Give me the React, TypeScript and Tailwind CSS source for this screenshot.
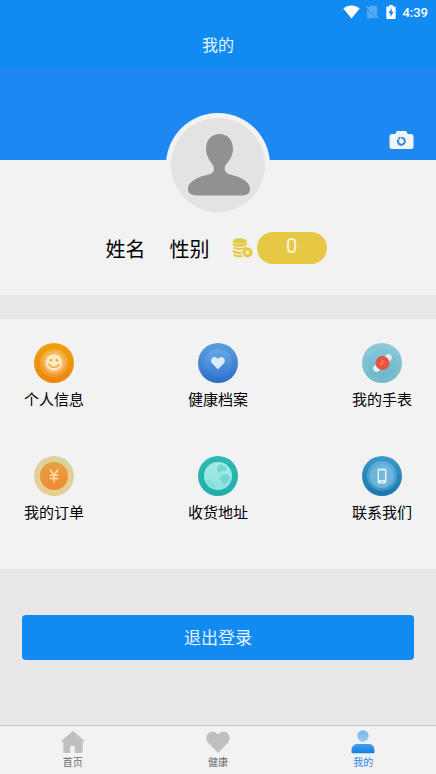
import type { ReactNode } from "react";

function StatusBar() {
  return (
    <div className="flex h-6 items-center justify-end pr-2 text-white">
      <svg width="17" height="14" viewBox="0 0 17 14" className="mr-1.5" aria-hidden="true">
        <path d="M0.3 3.4C2.6 1.5 5.4 0.5 8.5 0.5s5.9 1 8.2 2.9L8.5 13.6z" fill="#fff" />
      </svg>
      <svg width="12" height="14" viewBox="0 0 12 14" className="mr-2" aria-hidden="true">
        <path d="M4.2 0.8H10a1 1 0 0 1 1 1v9.3L2.6 2.5zM1 4v8.2a1 1 0 0 0 1 1h8z" fill="#55aaf6" />
        <path d="M0.6 1.2L11.6 13" stroke="#69b6f8" strokeWidth="1.3" />
      </svg>
      <svg width="10" height="14" viewBox="0 0 10 15" className="mr-1.5" aria-hidden="true">
        <path d="M3 0h4v1.6h2a1 1 0 0 1 1 1V14a1 1 0 0 1-1 1H1a1 1 0 0 1-1-1V2.600a1 1 0 0 1 1-1h2z" fill="#fff" />
        <path d="M5.800 3.600L2.200 8.900h2.200v3.900l3.500-5.500H5.800z" fill="#118af2" />
      </svg>
      <span className="pt-0.5 font-['Roboto','Noto_Sans_CJK_SC',sans-serif] text-[13px] leading-6 font-medium">4:39</span>
    </div>
  );
}

function Avatar() {
  return (
    <div className="size-[104px] rounded-full bg-[#f2f2f2] p-[5px]">
      <svg viewBox="0 0 94 94" className="size-full" role="img" aria-label="头像">
        <circle cx="47" cy="47" r="47" fill="#e3e3e3" />
        <path
          d="M48.500 16C40 16 35 22.500 35 31c0 6 3 11 6.500 15.500 2.500 4 2 8.500-3.500 10C27 58.500 17 64 17 70.500c0 5.500 4 7 10 7h43c6 0 9-2 9-7 0-6.500-10-12-20-14-5.500-1.500-6.500-6-4-10C59 42 62 37 62 31c0-8.500-5-15-13.500-15z"
          fill="#919191"
        />
      </svg>
    </div>
  );
}

function CoinsIcon() {
  return (
    <svg width="21" height="20" viewBox="0 0 21 20" aria-hidden="true">
      <g fill="#e7c845">
        <ellipse cx="7.800" cy="3" rx="7" ry="2.700" />
        <path d="M0.800 4.200c2.500 2.500 11.500 2.500 14 0v2.500c-2 2.800-12 2.800-14 0z" />
        <path d="M1.300 8.300c2.500 2.300 10.500 2.300 13.500 0v1.200c-2 .4-3 1.300-3.600 2-3.500.6-8.400.4-9.900-1.200z" />
        <path d="M0.800 11.800c2.200 1.800 6 2 9 1.800-.3.800-.4 1.600-.3 2.300-3.700.2-7.300-.2-8.700-1.700z" />
        <path d="M1.500 15.600c2 1.500 5.200 1.700 8.300 1.500.3.900.7 1.500 1.200 2-3.500.3-8-.1-9.500-1.700z" />
      </g>
      <circle cx="15.500" cy="14.500" r="3.500" fill="#f6f0d4" stroke="#e7c845" strokeWidth="3.200" />
    </svg>
  );
}

function Disc({ id, from, to, inner, innerTo, radius = 14, children }: {
  id: string;
  from: string;
  to: string;
  inner: string;
  innerTo: string;
  radius?: number;
  children: ReactNode;
}) {
  return (
    <svg viewBox="0 0 40 40" className="size-10" aria-hidden="true">
      <defs>
        <linearGradient id={id} x1="0" y1="0" x2="0" y2="1">
          <stop offset="0" stopColor={from} />
          <stop offset="1" stopColor={to} />
        </linearGradient>
        <linearGradient id={id + "-in"} x1="0" y1="0" x2="0" y2="1">
          <stop offset="0" stopColor={inner} />
          <stop offset="1" stopColor={innerTo} />
        </linearGradient>
      </defs>
      <circle cx="20" cy="20" r="20" fill={`url(#${id})`} />
      <circle cx="20" cy="20" r={radius} fill={`url(#${id}-in)`} />
      {children}
    </svg>
  );
}

const entries: { label: string; icon: ReactNode }[] = [
  {
    label: "个人信息",
    icon: (
      <Disc id="profile" from="#eea20c" to="#ed860c" inner="#f6ae3c" innerTo="#f49a35">
        <circle cx="20" cy="19.500" r="11" fill="#f8b85c" />
        <circle cx="20" cy="19.500" r="8.300" fill="#fdebc4" />
        <circle cx="17" cy="17.300" r="1.300" fill="#f3a02f" />
        <circle cx="23" cy="17.300" r="1.300" fill="#f3a02f" />
        <path d="M15 21.200c2 4.200 8 4.200 10 0" fill="none" stroke="#f3a02f" strokeWidth="1.400" strokeLinecap="round" />
      </Disc>
    ),
  },
  {
    label: "健康档案",
    icon: (
      <Disc id="health" from="#5b9fdf" to="#2f6dc8" inner="#66a6e6" innerTo="#397bd4">
        <path d="M20 26.500l-5.700-5.900c-3.600-3.800 1.400-9.300 5.700-4.900 4.300-4.400 9.300 1.100 5.700 4.900z" fill="#d8ecfb" />
      </Disc>
    ),
  },
  {
    label: "我的手表",
    icon: (
      <Disc id="watch" from="#8bcbd9" to="#76b8c9" inner="#83c8da" innerTo="#6db5cc" radius={15}>
        <path d="M14.500 25.500l12-11" stroke="#e5f0f1" strokeWidth="6.500" strokeLinecap="round" />
        <circle cx="20.500" cy="20" r="7" fill="#e55347" />
        <circle cx="20.500" cy="20" r="4.500" fill="#f0503d" />
        <path d="M20.500 16.800v3.500l-2 1.200" fill="none" stroke="#f98a55" strokeWidth="1.600" />
      </Disc>
    ),
  },
  {
    label: "我的订单",
    icon: (
      <Disc id="orders" from="#ddd29c" to="#e7ce93" inner="#e8a043" innerTo="#f08a35">
        <path d="M16 13.500l4 5.500 4-5.500M20 19v7.500M15.800 19.300h8.400M15.800 22.500h8.400" fill="none" stroke="#fce0a8" strokeWidth="1.500" />
      </Disc>
    ),
  },
  {
    label: "收货地址",
    icon: (
      <Disc id="address" from="#31b9b2" to="#20ada9" inner="#a7e9e4" innerTo="#8ae4df">
        <path d="M20 9c3-.8 7 .8 9 3l-2 3-3-.5-2 3-3-3zM24 19l5-1 3 3-2 5-4 3-2-4-3-2z" fill="#6bd2cc" opacity=".8" />
        <path d="M9 24l4 1 4 4 1 4c-4-.5-8-4-9-9z" fill="#78d9d3" opacity=".6" />
      </Disc>
    ),
  },
  {
    label: "联系我们",
    icon: (
      <Disc id="contact" from="#3a99ca" to="#1c75ae" inner="#62add8" innerTo="#3e94c7" radius={15}>
        <circle cx="20" cy="20" r="12" fill="#6db5dc" />
        <rect x="15.500" y="12.500" width="9" height="15" rx="1.500" fill="#dff2fb" />
        <rect x="17" y="14.500" width="6" height="9.500" fill="#74b8dc" />
        <circle cx="20" cy="25.700" r="0.800" fill="#74b8dc" />
      </Disc>
    ),
  },
];

const tabs = [
  {
    label: "首页",
    active: false,
    icon: (
      <path d="M12 1L0.700 10.400c-.5.500-.2 1.100.5 1.100H2.300v10.300c0 .7.500 1.200 1.200 1.200h5.700v-5.600c0-1 .7-1.600 1.600-1.600h1.500c.9 0 1.600.6 1.600 1.600V23h6.600c.7 0 1.200-.5 1.200-1.200V11.500h1.200c.7 0 1-.6.400-1.100z" fill="#bfbfbf" />
    ),
  },
  {
    label: "健康",
    active: false,
    icon: (
      <path d="M12 22.800L2.800 13.600C-2.300 7.800 1.500 1.800 6.300 1.800c2.500 0 4.500 1.100 5.700 3 1.200-1.900 3.200-3 5.700-3 4.800 0 8.600 6 3.500 11.800z" fill="#bfbfbf" />
    ),
  },
  {
    label: "我的",
    active: true,
    icon: (
      <>
        <defs>
          <linearGradient id="tab-head" x1="0" y1="0" x2="0" y2="1">
            <stop offset="0" stopColor="#79b3ea" />
            <stop offset="1" stopColor="#9dc9f3" />
          </linearGradient>
          <linearGradient id="tab-body" x1="0" y1="0" x2="0" y2="1">
            <stop offset="0" stopColor="#439eee" />
            <stop offset="1" stopColor="#117fe3" />
          </linearGradient>
        </defs>
        <circle cx="12" cy="6" r="5.700" fill="url(#tab-head)" />
        <path d="M6 14h12c3.500 0 5.500 3 5.500 6.500V22c0 .8-.5 1.300-1.300 1.300H1.800C1 23.300.500 22.800.500 22v-1.500C.500 17 2.500 14 6 14z" fill="url(#tab-body)" />
      </>
    ),
  },
];

export default function App() {
  return (
    <div className="flex min-h-screen flex-col bg-[#e8e8e8] font-['Roboto','Noto_Sans_CJK_SC',sans-serif] text-black">
      <header className="bg-[#118af2]">
        <StatusBar />
        <h1 className="flex h-[43px] items-center justify-center text-[16px] leading-6 text-[#e4f4ff]">我的</h1>
      </header>

      <main className="flex-1">
        <section className="bg-[#f2f2f2] pb-[31px]">
          <div className="relative h-[93px] bg-[#1e88f2]">
            <div className="absolute top-[46px] left-1/2 -translate-x-1/2">
              <Avatar />
            </div>
            <button type="button" aria-label="更换头像" className="absolute right-[22px] bottom-2.5">
              <svg width="25" height="20" viewBox="0 0 25 20" className="block" aria-hidden="true">
                <path d="M8 1h9l1.800 3H22a2.500 2.500 0 0 1 2.500 2.500v10A2.500 2.500 0 0 1 22 19H3A2.500 2.500 0 0 1 .500 16.500v-10A2.500 2.500 0 0 1 3 4h3.200z" fill="#f2f5f8" />
                <path d="M9.300 9.500a3.500 3.500 0 1 0 3.200-1.800" fill="none" stroke="#2f87dc" strokeWidth="2" />
                <path d="M9 7l3 .3-1.600 2.900z" fill="#2f87dc" />
              </svg>
            </button>
          </div>
          <div className="mt-18 flex h-8 items-center justify-center pr-1 text-[20px]">
            <div className="flex gap-6 pt-1 leading-7">
              <span>姓名</span>
              <span>性别</span>
            </div>
            <span className="ml-[22px]">
              <CoinsIcon />
            </span>
            <span className="ml-1 h-8 w-[70px] rounded-full bg-[#e7c845] text-center leading-7 text-[#fdf7e0]">0</span>
          </div>
        </section>

        <section className="mt-6 grid grid-cols-[auto_auto_auto] justify-between gap-y-10 bg-[#f2f2f2] px-6 pt-6 pb-10">
          {entries.map((entry) => (
            <button key={entry.label} type="button" className="flex h-[73px] flex-col items-center gap-[5px]">
              {entry.icon}
              <span className="text-[15px] leading-6">{entry.label}</span>
            </button>
          ))}
        </section>

        <div className="px-[22px] py-[46px]">
          <button type="button" className="h-[45px] w-full rounded bg-[#118af2] pt-0.5 text-[17px] text-[#e4f4ff]">
            退出登录
          </button>
        </div>
      </main>

      <nav className="grid h-[49px] grid-cols-3 border-t border-[#c4c4c4] bg-[#f2f2f2]">
        {tabs.map((tab) => (
          <a
            key={tab.label}
            href="#"
            aria-current={tab.active ? "page" : undefined}
            className={
              tab.active
                ? "flex flex-col items-center pt-1 text-[10px] leading-[18px] text-[#2b8ae6]"
                : "flex flex-col items-center pt-1 text-[10px] leading-[18px] text-[#6b6b6b]"
            }
          >
            <svg width="24" height="24" viewBox="0 0 24 24" aria-hidden="true">
              {tab.icon}
            </svg>
            {tab.label}
          </a>
        ))}
      </nav>
    </div>
  );
}
